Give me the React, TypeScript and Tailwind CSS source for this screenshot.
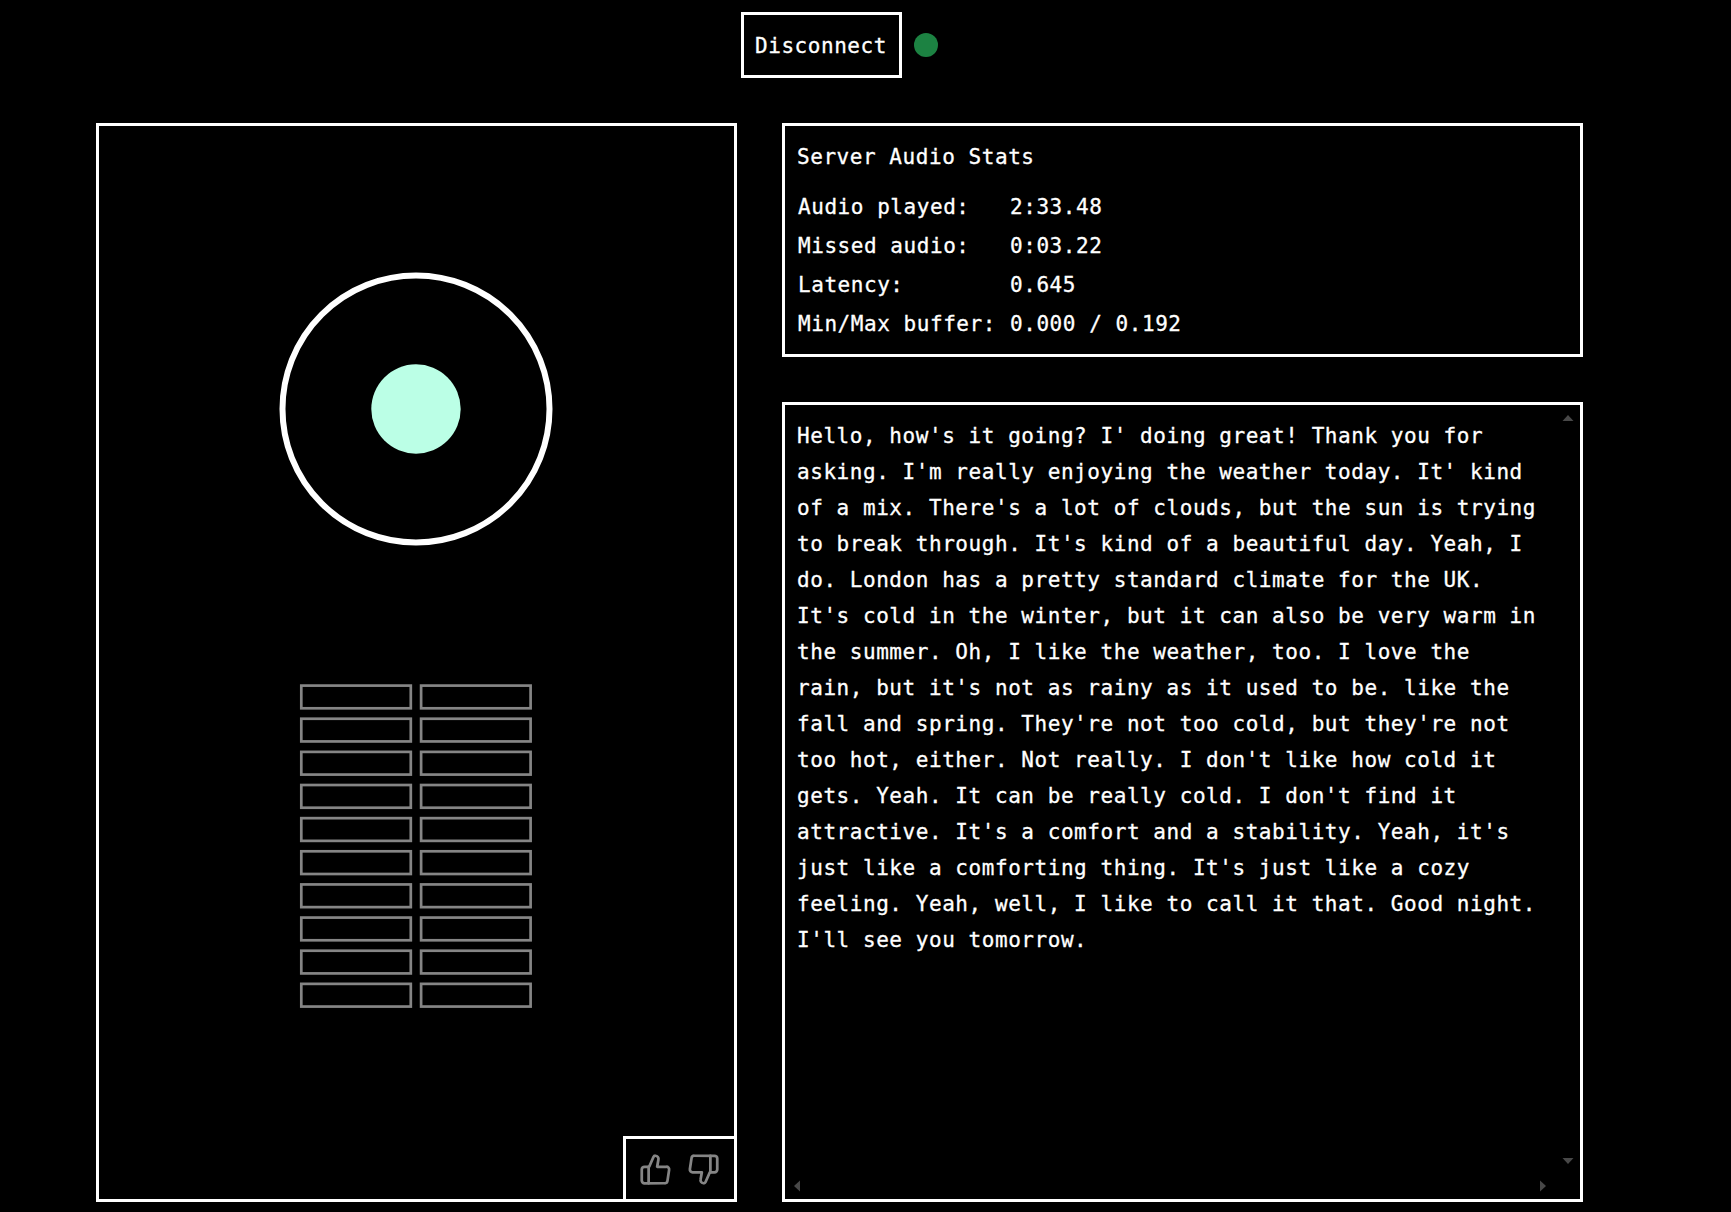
const stats: [string, string][] = [
  ["Audio played:", "2:33.48"],
  ["Missed audio:", "0:03.22"],
  ["Latency:", "0.645"],
  ["Min/Max buffer:", "0.000 / 0.192"],
];

const transcript = [
  "Hello, how's it going? I' doing great! Thank you for",
  "asking. I'm really enjoying the weather today. It' kind",
  "of a mix. There's a lot of clouds, but the sun is trying",
  "to break through. It's kind of a beautiful day. Yeah, I",
  "do. London has a pretty standard climate for the UK.",
  "It's cold in the winter, but it can also be very warm in",
  "the summer. Oh, I like the weather, too. I love the",
  "rain, but it's not as rainy as it used to be. like the",
  "fall and spring. They're not too cold, but they're not",
  "too hot, either. Not really. I don't like how cold it",
  "gets. Yeah. It can be really cold. I don't find it",
  "attractive. It's a comfort and a stability. Yeah, it's",
  "just like a comforting thing. It's just like a cozy",
  "feeling. Yeah, well, I like to call it that. Good night.",
  "I'll see you tomorrow.",
];

function Thumb({ className = "" }: { className?: string }) {
  return (
    <svg
      className={`h-[33px] w-[33px] ${className}`}
      viewBox="0 0 24 24"
      fill="none"
      stroke="currentColor"
      strokeWidth="2"
      strokeLinecap="round"
      strokeLinejoin="round"
    >
      <path d="M7 10v12" />
      <path d="M7.4 10l3.100-7.100A1.500 1.500 0 0 1 11.900 2a2.300 2.300 0 0 1 2.200 2.900L13.200 10h6.700a2 2 0 0 1 2 2.300l-1.200 8a2 2 0 0 1-2 1.700H4a2 2 0 0 1-2-2v-8a2 2 0 0 1 2-2z" />
    </svg>
  );
}

function ServerOrb() {
  return (
    <svg className="ml-[180px] mt-[146px] block h-[274px] w-[274px]" viewBox="0 0 274 274">
      <circle cx="137" cy="137" r="133.500" fill="none" stroke="#fff" strokeWidth="6" />
      <circle cx="137" cy="137" r="44.700" fill="#bbffe6" />
    </svg>
  );
}

function LevelMeter() {
  const rows = Array.from({ length: 10 }, (_, i) => i);
  return (
    <svg className="ml-[200px] mt-[138px] block h-[326px] w-[234px]" viewBox="0 0 234 326">
      {rows.map((i) =>
        [2.3, 122.1].map((x) => (
          <rect
            key={`${i}-${x}`}
            x={x}
            y={1.6 + i * 33.14}
            width="109.500"
            height="22.700"
            fill="none"
            stroke="#858585"
            strokeWidth="2.700"
          />
        )),
      )}
    </svg>
  );
}

function Transcript() {
  return (
    <section className="relative h-[800px] border-3 border-white px-3 pt-[13px]">
      {transcript.map((line) => (
        <p key={line} className="whitespace-pre">
          {line}
        </p>
      ))}
      <svg className="absolute right-[6.500px] top-[10px] h-[6px] w-3" viewBox="0 0 12 6">
        <path d="M0.500 6 6 0l5.500 6z" fill="#484848" />
      </svg>
      <svg className="absolute bottom-[35px] right-[6.500px] h-[6px] w-3" viewBox="0 0 12 6">
        <path d="M0.500 0 6 6l5.500-6z" fill="#484848" />
      </svg>
      <svg className="absolute bottom-[7px] left-[9px] h-3 w-[6px]" viewBox="0 0 6 12">
        <path d="M6 0.500 0 6l6 5.500z" fill="#484848" />
      </svg>
      <svg className="absolute bottom-[7px] right-[34px] h-3 w-[6px]" viewBox="0 0 6 12">
        <path d="M0 0.500 6 6l-6 5.500z" fill="#484848" />
      </svg>
    </section>
  );
}

export default function App() {
  return (
    <div className="h-[1212px] w-full overflow-hidden bg-black pt-3 font-['DejaVu_Sans_Mono',monospace] text-[21px] leading-9 tracking-[0.553px] text-white [-webkit-text-stroke:0.3px_white]">
      <header className="ml-[741px] flex items-center gap-3">
        <button className="flex h-[66px] w-[161px] items-center border-3 border-white pl-[11px] pt-0.5">
          Disconnect
        </button>
        <span className="size-6 rounded-full bg-[#1c8242]" />
      </header>
      <main className="ml-24 mt-[45px] flex gap-[45px]">
        <section className="relative h-[1079px] w-[641px] border-3 border-white">
          <ServerOrb />
          <LevelMeter />
          <div className="absolute -bottom-[3px] -right-[3px] flex h-[66px] w-[114px] items-center justify-center gap-[15px] border-3 border-white pr-px text-[#858585]">
            <Thumb />
            <Thumb className="rotate-180" />
          </div>
        </section>
        <div className="flex w-[801px] flex-col gap-[45px]">
          <section className="h-[234px] border-3 border-white px-3 pt-[13px]">
            <h2>Server Audio Stats</h2>
            <dl className="ml-px mt-[14px] grid grid-cols-[212px_auto] gap-y-[3px]">
              {stats.map(([label, value]) => (
                <div key={label} className="contents">
                  <dt className="whitespace-nowrap">{label}</dt>
                  <dd className="whitespace-nowrap">{value}</dd>
                </div>
              ))}
            </dl>
          </section>
          <Transcript />
        </div>
      </main>
    </div>
  );
}
